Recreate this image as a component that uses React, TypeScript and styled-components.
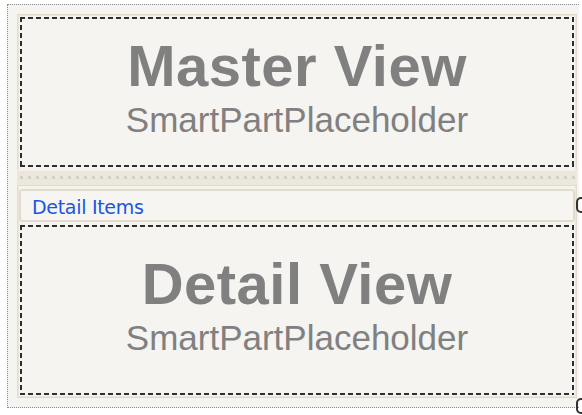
import React, { FC } from "react";
import styled, { createGlobalStyle } from "styled-components";

const GlobalStyle = createGlobalStyle`
  html, body {
    margin: 0;
    padding: 0;
    background: #ffffff;
  }
  body {
    width: 582px;
    height: 415px;
    overflow: hidden;
    font-family: "Liberation Sans", Arial, sans-serif;
  }
`;

// outer designer surface, dotted selection frame
const Surface = styled.div`
  position: relative;
  width: 582px;
  height: 415px;
  padding: 4px 0 0 7px;
  box-sizing: border-box;
`;

const Frame = styled.div`
  width: 572px;
  height: 404px;
  box-sizing: border-box;
  border: 1px dotted #8a8a8a;
  border-right: none;
  background: #f5f4f0;
  padding: 9px 2px 9px 9px;
  display: flex;
`;

// beige workspace column
const Workspace = styled.div`
  flex: 1;
  display: flex;
  flex-direction: column;
  border: 1px solid #e3dccd;
  box-shadow: inset 0 0 0 1px #ece6da;
  padding: 2px;
  background: #f4f3ef;
`;

// dashed placeholder area
const Placeholder = styled.div<{ $height: number }>`
  height: ${(p) => p.$height}px;
  box-sizing: border-box;
  display: flex;
  flex-direction: column;
  align-items: center;
  justify-content: center;
  padding-bottom: 10px;
  color: #808080;
  background-color: #f5f4f0;
  background-image:
    repeating-linear-gradient(90deg, #2e2e2e 0 5px, transparent 5px 8px),
    repeating-linear-gradient(90deg, #2e2e2e 0 5px, transparent 5px 8px),
    repeating-linear-gradient(180deg, #2e2e2e 0 5px, transparent 5px 8px),
    repeating-linear-gradient(180deg, #2e2e2e 0 5px, transparent 5px 8px);
  background-size: 100% 2px, 100% 2px, 2px 100%, 2px 100%;
  background-position: 0 0, 0 100%, 0 0, 100% 0;
  background-repeat: no-repeat;
`;

const Title = styled.div`
  font-family: "Liberation Sans", Arial, sans-serif;
  font-weight: bold;
  font-size: 58px;
  line-height: 60px;
  letter-spacing: 0.5px;
  margin-bottom: 6px;
`;

const Subtitle = styled.div`
  font-family: "Liberation Sans", Arial, sans-serif;
  font-size: 35px;
  line-height: 36px;
`;

// splitter bar with a single row of grip dots
const Splitter = styled.div`
  height: 14px;
  margin: 3px -3px 3px;
  background-color: #ece7dc;
  background-image: linear-gradient(90deg, #d5d0c5 0 3px, transparent 3px);
  background-size: 8px 3px;
  background-position: 3px 5px;
  background-repeat: repeat-x;
  border-top: 1px solid #f4f0e8;
  border-bottom: 1px solid #e2dbcc;
`;

const Header = styled.div`
  height: 34px;
  margin: 0 -1px 3px;
  box-sizing: border-box;
  border: 2px solid #e3dccd;
  border-radius: 3px;
  background: #f6f5f1;
  display: flex;
  align-items: center;
  padding-left: 11px;
  padding-top: 2px;
`;

const HeaderLink = styled.span`
  font-family: "DejaVu Sans", Tahoma, sans-serif;
  font-size: 19px;
  letter-spacing: -0.3px;
  color: #1c55e0;
`;

// partial grab handles at the right edge
const Handle = styled.div<{ $top: number }>`
  position: absolute;
  right: -4px;
  top: ${(p) => p.$top}px;
  width: 10px;
  height: 16px;
  border: 2px solid #333;
  border-radius: 5px;
  box-sizing: border-box;
`;

const PlaceholderView: FC<{ title: string; height: number }> = ({ title, height }) => (
  <Placeholder $height={height}>
    <Title>{title}</Title>
    <Subtitle>SmartPartPlaceholder</Subtitle>
  </Placeholder>
);

const App: FC = () => (
  <>
    <GlobalStyle />
    <Surface>
      <Frame>
        <Workspace>
          <PlaceholderView title="Master View" height={150} />
          <Splitter />
          <Header>
            <HeaderLink>Detail Items</HeaderLink>
          </Header>
          <PlaceholderView title="Detail View" height={170} />
        </Workspace>
      </Frame>
      <Handle $top={197} />
      <Handle $top={398} />
    </Surface>
  </>
);

export default App;
